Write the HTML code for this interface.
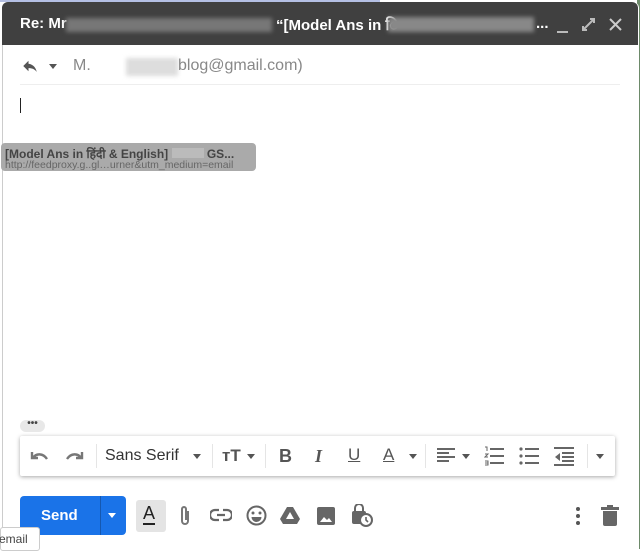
<!DOCTYPE html><html><head><style>
body{margin:0;width:640px;height:549px;overflow:hidden;background:#fff;font-family:"Liberation Sans",Arial,sans-serif;position:relative}
.a{position:absolute}
.blur{background:#bdbdbd;filter:blur(2px)}
</style></head><body>
<div class="a" style="left:0;top:0;width:380px;height:2px;background:#6a80c8;opacity:.5"></div>
<div class="a" style="left:637px;top:0;width:3px;height:549px;background:#6d8a6a"></div>
<div class="a" style="left:2px;top:2px;width:636px;height:547px;background:#fff;border-left:1px solid #ccc;border-radius:6px 6px 0 0"></div>
<div class="a" style="left:2px;top:2px;width:636px;height:43px;background:#404040;border-radius:6px 6px 0 0"></div>
<div class="a" style="left:20px;top:15px;color:#fff;font-weight:bold;font-size:15px;white-space:nowrap">Re: Mr</div>
<div class="a blur" style="left:66px;top:18px;width:206px;height:14px;background:#777"></div>
<div class="a" style="left:276px;top:15px;color:#fff;font-weight:bold;font-size:15px;white-space:nowrap">“[Model Ans in ि</div>
<div class="a blur" style="left:388px;top:17px;width:146px;height:15px;background:#888"></div>
<div class="a" style="left:536px;top:15px;color:#fff;font-weight:bold;font-size:15px">...</div>
<div class="a" style="left:557px;top:31px;width:11px;height:2px;background:#bbb"></div>
<svg class="a" style="left:582px;top:18px" width="13" height="13" viewBox="0 0 13 13"><path d="M1 12L12 1M8 1h4v4M1 8v4h4" stroke="#bbb" stroke-width="2" fill="none"/></svg>
<svg class="a" style="left:609px;top:18px" width="13" height="13" viewBox="0 0 13 13"><path d="M1 1L12 12M12 1L1 12" stroke="#ccc" stroke-width="2"/></svg>
<svg class="a" style="left:20px;top:57px" width="20" height="18" viewBox="0 0 24 24"><path d="M10 9V5l-7 7 7 7v-4.1c5 0 8.5 1.6 11 5.1-1-5-4-10-11-11z" fill="#555"/></svg>
<div class="a" style="left:49px;top:64px;border:4px solid transparent;border-top:5px solid #555"></div>
<div class="a" style="left:73px;top:57px;color:#888;font-size:16px">M.</div>
<div class="a blur" style="left:126px;top:58px;width:52px;height:18px;background:#ddd"></div>
<div class="a" style="left:178px;top:57px;color:#888;font-size:16px">blog@gmail.com)</div>
<div class="a" style="left:20px;top:84px;width:600px;height:1px;background:#eee"></div>
<div class="a" style="left:20px;top:98px;width:1px;height:15px;background:#222"></div>
<div class="a" style="left:1px;top:143px;width:255px;height:28px;background:#aaa;border-radius:4px"></div>
<div class="a" style="left:5px;top:145px;font-size:12px;font-weight:bold;color:#444;white-space:nowrap">[Model Ans in हिंदी &amp; English] <span style="display:inline-block;width:32px;height:10px;background:#bbb"></span> GS...</div>
<div class="a" style="left:5px;top:159px;font-size:10.5px;color:#666;white-space:nowrap">http://feedproxy.g..gl…urner&amp;utm_medium=email</div>
<div class="a" style="left:20px;top:420px;width:25px;height:12px;background:#e8e8e8;border-radius:6px;font-size:10px;line-height:8px;text-align:center;color:#444;font-weight:bold">•••</div>
<div class="a" style="left:20px;top:436px;width:595px;height:40px;background:#fff;box-shadow:0 1px 4px rgba(0,0,0,.35);border-radius:2px"></div>
<svg class="a" style="left:30px;top:448px" width="20" height="16" viewBox="0 0 20 16"><path d="M2 4v6h6M3 10c3-5 10-5 14 1" stroke="#777" stroke-width="2.4" fill="none"/></svg>
<svg class="a" style="left:64px;top:448px" width="20" height="16" viewBox="0 0 20 16"><path d="M18 4v6h-6M17 10c-3-5-10-5-14 1" stroke="#777" stroke-width="2.4" fill="none"/></svg>
<div class="a" style="left:96px;top:444px;width:1px;height:24px;background:#e5e5e5"></div>
<div class="a" style="left:105px;top:447px;color:#333;font-size:16px">Sans Serif</div>
<div class="a" style="left:193px;top:454px;border:4px solid transparent;border-top:5px solid #555"></div>
<div class="a" style="left:212px;top:444px;width:1px;height:24px;background:#e5e5e5"></div>
<div class="a" style="left:222px;top:446px;color:#555;font-size:17px;font-weight:bold">ᴛT</div>
<div class="a" style="left:247px;top:454px;border:4px solid transparent;border-top:5px solid #555"></div>
<div class="a" style="left:265px;top:444px;width:1px;height:24px;background:#e5e5e5"></div>
<div class="a" style="left:279px;top:446px;color:#555;font-size:18px;font-weight:bold">B</div>
<div class="a" style="left:315px;top:446px;color:#555;font-size:18px;font-weight:bold;font-style:italic;font-family:'Liberation Serif',serif">I</div>
<div class="a" style="left:348px;top:445px;color:#555;font-size:17px;text-decoration:underline">U</div>
<div class="a" style="left:383px;top:445px;color:#555;font-size:17px;text-decoration:underline">A</div>
<div class="a" style="left:409px;top:454px;border:4px solid transparent;border-top:5px solid #555"></div>
<div class="a" style="left:425px;top:444px;width:1px;height:24px;background:#e5e5e5"></div>
<svg class="a" style="left:437px;top:448px" width="18" height="16" viewBox="0 0 18 16"><path d="M0 1h18M0 5h12M0 9h18M0 13h12" stroke="#666" stroke-width="2"/></svg>
<div class="a" style="left:462px;top:454px;border:4px solid transparent;border-top:5px solid #555"></div>
<svg class="a" style="left:484px;top:446px" width="20" height="20" viewBox="0 0 20 20"><path d="M6 3h14M6 10h14M6 17h14" stroke="#666" stroke-width="2"/><path d="M1 1h2v4M1 8h3l-3 3h3M1 15h3v4H1M1 17h3" stroke="#666" stroke-width="1" fill="none"/></svg>
<svg class="a" style="left:519px;top:446px" width="20" height="20" viewBox="0 0 20 20"><path d="M6 3h14M6 10h14M6 17h14" stroke="#666" stroke-width="2"/><circle cx="2" cy="3" r="1.6" fill="#666"/><circle cx="2" cy="10" r="1.6" fill="#666"/><circle cx="2" cy="17" r="1.6" fill="#666"/></svg>
<svg class="a" style="left:554px;top:446px" width="20" height="20" viewBox="0 0 20 20"><path d="M0 2h20M8 7h12M8 11h12M8 15h12M0 19h20" stroke="#666" stroke-width="2"/><path d="M6 7l-5 4 5 4z" fill="#666"/></svg>
<div class="a" style="left:587px;top:444px;width:1px;height:24px;background:#e5e5e5"></div>
<div class="a" style="left:596px;top:454px;border:4px solid transparent;border-top:5px solid #555"></div>
<div class="a" style="left:20px;top:496px;width:106px;height:39px;background:#1a73e8;border-radius:4px"></div>
<div class="a" style="left:100px;top:496px;width:1px;height:39px;background:#1558b0"></div>
<div class="a" style="left:41px;top:507px;color:#fff;font-size:15px;font-weight:bold">Send</div>
<div class="a" style="left:108px;top:513px;border:4px solid transparent;border-top:5px solid #fff"></div>
<div class="a" style="left:136px;top:500px;width:30px;height:32px;background:#e4e4e4;border-radius:3px"></div>
<div class="a" style="left:143px;top:503px;color:#222;font-size:18px;border-bottom:2px solid #222;line-height:20px">A</div>
<svg class="a" style="left:179px;top:505px" width="12" height="22" viewBox="0 0 12 22"><path d="M9 6v10a3 3 0 0 1-6 0V4a2 2 0 0 1 4 0v11" stroke="#777" stroke-width="2" fill="none"/></svg>
<svg class="a" style="left:210px;top:508px" width="22" height="14" viewBox="0 0 22 14"><path d="M9 2H5a5 5 0 0 0 0 10h4M13 2h4a5 5 0 0 1 0 10h-4M7 7h8" stroke="#666" stroke-width="2.2" fill="none"/></svg>
<svg class="a" style="left:246px;top:505px" width="21" height="21" viewBox="0 0 21 21"><circle cx="10.5" cy="10.5" r="9" stroke="#666" stroke-width="2" fill="none"/><circle cx="7" cy="8" r="1.5" fill="#666"/><circle cx="14" cy="8" r="1.5" fill="#666"/><path d="M5.5 12h10a5 5 0 0 1-10 0z" fill="#666"/></svg>
<svg class="a" style="left:280px;top:507px" width="20" height="17" viewBox="0 0 20 17"><path d="M7 0h6l7 12-3 5H3L0 12z" fill="#666"/><path d="M10 5l-4 7h8z" fill="#fff"/></svg>
<svg class="a" style="left:317px;top:507px" width="18" height="18" viewBox="0 0 18 18"><rect width="18" height="18" rx="2" fill="#666"/><path d="M3 15l4-5 3 3 2-2 3 4z" fill="#fff"/></svg>
<svg class="a" style="left:351px;top:504px" width="22" height="23" viewBox="0 0 22 23"><path d="M4 7V4a4 4 0 0 1 8 0v3" stroke="#666" stroke-width="2" fill="none"/><rect x="1" y="7" width="14" height="13" rx="2" fill="#666"/><circle cx="15" cy="16" r="6" fill="#fff" stroke="#666" stroke-width="2"/><path d="M15 13v3l2 2" stroke="#666" stroke-width="1.6" fill="none"/></svg>
<svg class="a" style="left:575px;top:506px" width="6" height="20" viewBox="0 0 6 20"><circle cx="3" cy="3" r="2" fill="#555"/><circle cx="3" cy="10" r="2" fill="#555"/><circle cx="3" cy="17" r="2" fill="#555"/></svg>
<svg class="a" style="left:601px;top:505px" width="18" height="21" viewBox="0 0 18 21"><path d="M6 0h6v2h6v3H0V2h6z" fill="#666"/><path d="M2 6h14v13a2 2 0 0 1-2 2H4a2 2 0 0 1-2-2z" fill="#666"/></svg>
<div class="a" style="left:0;top:527px;width:38px;height:22px;background:#fff;border:1px solid #ccc;border-radius:3px;font-size:12px;color:#444;line-height:22px;text-indent:-2px">email</div>
</body></html>
